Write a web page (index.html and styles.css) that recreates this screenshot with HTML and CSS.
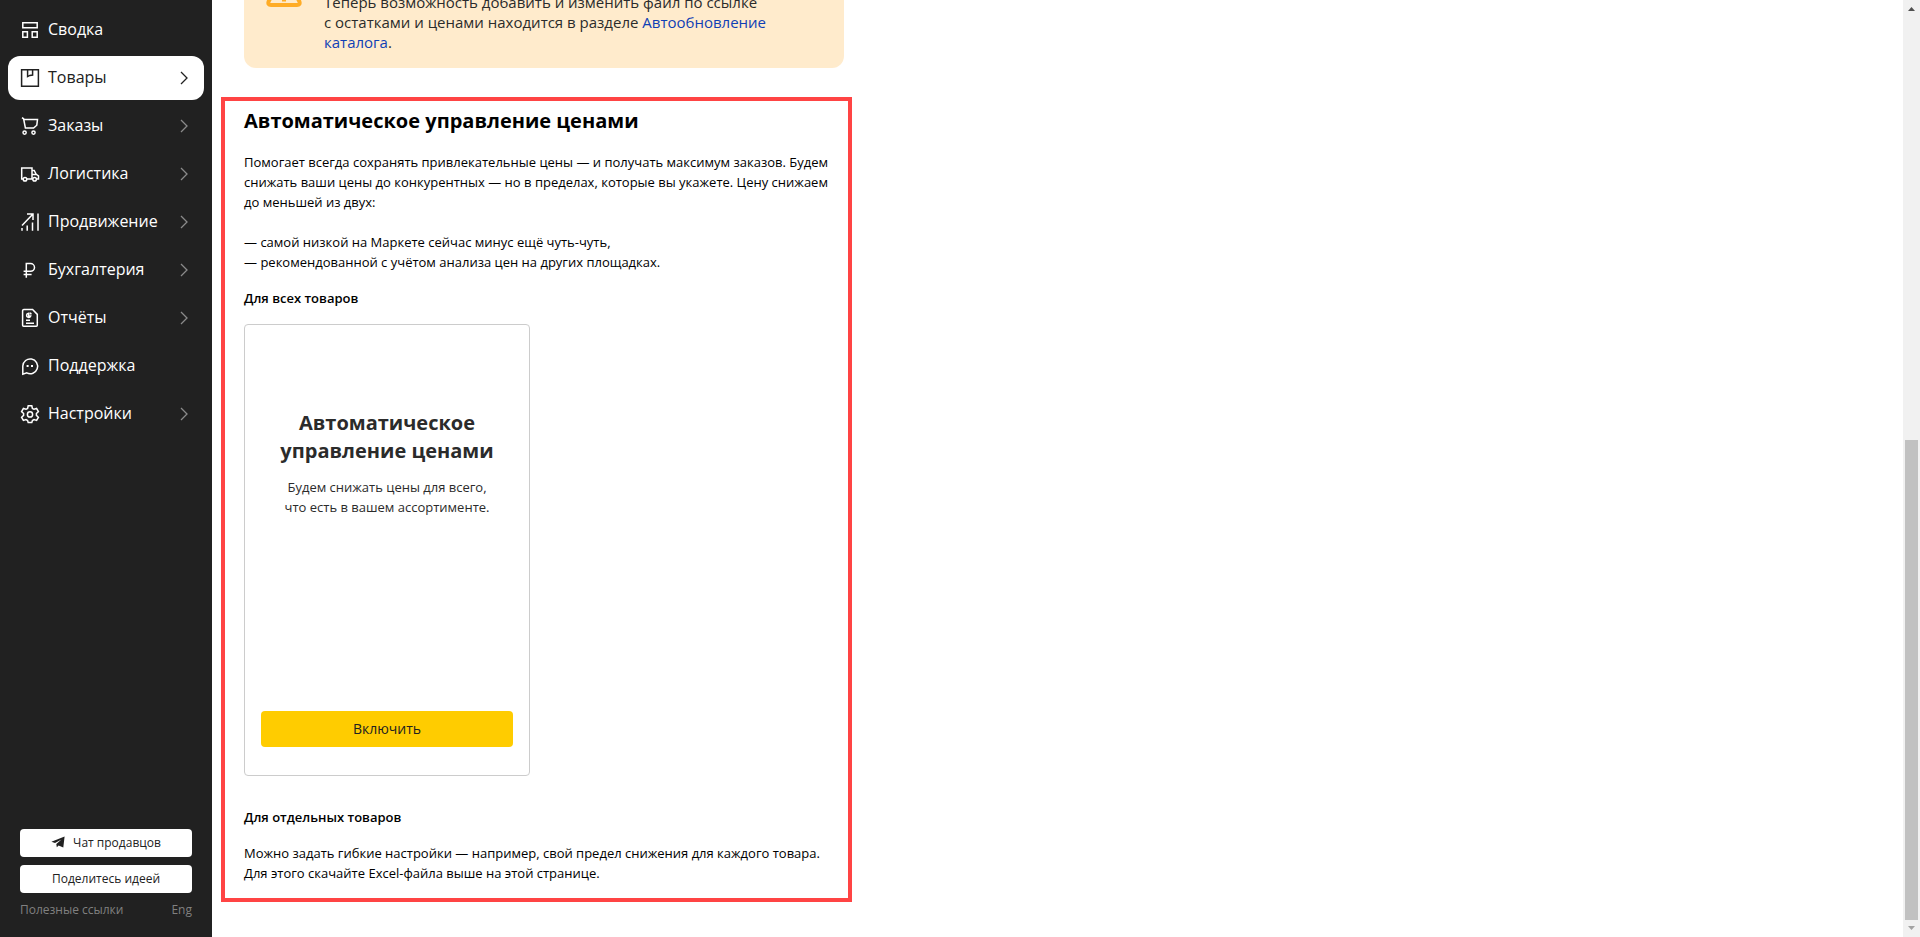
FILE: index.html
```html
<!DOCTYPE html>
<html lang="ru">
<head>
    <meta charset="UTF-8">
    <meta name="viewport" content="width=device-width, initial-scale=1.0">
    <title>Товары</title>
    <link rel="stylesheet" href="styles.css">
</head>
<body>
    <aside class="sidebar">
        <nav class="menu">
            <a class="menu-item" href="#">
                <svg class="icon" viewBox="0 0 20 20"><path d="M2.8 2.8h14.4v4.9H2.8zM2.8 11.8h4.6v5.4H2.8zM12.2 11.8h5v5.4h-5z"/></svg>
                <span class="menu-text">Сводка</span>
            </a>
            <a class="menu-item active" href="#">
                <svg class="icon" viewBox="0 0 20 20"><path d="M1.6 1.8h16.8v16.4H1.6zM7.6 2v6.6l2.2-1.2 2.8-.4V2"/></svg>
                <span class="menu-text">Товары</span>
                <svg class="arrow" viewBox="0 0 8 14"><path d="M1 1l6 6-6 6"/></svg>
            </a>
            <a class="menu-item" href="#">
                <svg class="icon" viewBox="0 0 20 20"><path d="M2 1.6l1.6 1.2L5.4 12h8.2l3.2-2.8.7-5.7-13.7-.2"/><circle cx="4.6" cy="16.6" r="1.6"/><circle cx="13.5" cy="16.6" r="1.6"/></svg>
                <span class="menu-text">Заказы</span>
                <svg class="arrow" viewBox="0 0 8 14"><path d="M1 1l6 6-6 6"/></svg>
            </a>
            <a class="menu-item" href="#">
                <svg class="icon" viewBox="0 0 20 20"><path d="M3 15H1.7V4H12v11H7M12 6.5h2.2l2 3.8 2.3 1.6V15h-1.8M12 10.5h4"/><circle cx="5" cy="15.3" r="1.8"/><circle cx="14.6" cy="15.3" r="1.8"/></svg>
                <span class="menu-text">Логистика</span>
                <svg class="arrow" viewBox="0 0 8 14"><path d="M1 1l6 6-6 6"/></svg>
            </a>
            <a class="menu-item" href="#">
                <svg class="icon" viewBox="0 0 20 20"><path d="M2 13.5L12.5 2.5M7 2h6v6M2 16v2.8M7.2 13.4v5.4M12.5 10.5v8.3M18 1.5v17.3"/></svg>
                <span class="menu-text">Продвижение</span>
                <svg class="arrow" viewBox="0 0 8 14"><path d="M1 1l6 6-6 6"/></svg>
            </a>
            <a class="menu-item" href="#">
                <svg class="icon" viewBox="0 0 20 20"><path d="M6.3 17.8V3.6h4.2a3.9 3.7 0 0 1 0 7.6H3.6M3.6 14.4h8"/></svg>
                <span class="menu-text">Бухгалтерия</span>
                <svg class="arrow" viewBox="0 0 8 14"><path d="M1 1l6 6-6 6"/></svg>
            </a>
            <a class="menu-item" href="#">
                <svg class="icon" viewBox="0 0 20 20"><path d="M4 1.6h8.6l4.7 4.8v10.8a1 1 0 0 1-1 1H3.6a1 1 0 0 1-1-1V2.8a1.2 1.2 0 0 1 1.4-1.2z"/><path d="M8.6 5.2a2.1 2.1 0 1 0 2 2.9H8.6zM10.4 4.6v1.2h1.2M6 12.2h4M6 15.2h8"/></svg>
                <span class="menu-text">Отчёты</span>
                <svg class="arrow" viewBox="0 0 8 14"><path d="M1 1l6 6-6 6"/></svg>
            </a>
            <a class="menu-item" href="#">
                <svg class="icon" viewBox="0 0 20 20"><path d="M2.8 18.2V10a7.4 7.4 0 1 1 4 6.900z"/><path class="fill" d="M6.6 9h2v2h-2zM11 9h2v2h-2z"/></svg>
                <span class="menu-text">Поддержка</span>
            </a>
            <a class="menu-item" href="#">
                <svg class="icon" viewBox="0 0 20 20"><path d="M8.2 1.8h3.6l.6 2.6 1.6.9 2.6-.8 1.8 3.1-2 1.9v1.9l2 1.9-1.8 3.1-2.6-.8-1.6.9-.6 2.1H8.2l-.6-2.1-1.6-.9-2.6.8-1.8-3.1 2-1.9V9.500l-2-1.900 1.800-3.100 2.600.8 1.600-.9z"/><circle cx="10" cy="10.400" r="2.600"/></svg>
                <span class="menu-text">Настройки</span>
                <svg class="arrow" viewBox="0 0 8 14"><path d="M1 1l6 6-6 6"/></svg>
            </a>
        </nav>

        <div class="sidebar-bottom">
            <button class="side-btn" type="button">
                <svg class="telegram" viewBox="0 0 14 12"><path d="M.4 5.800L13.600.6 12.300 11.600 7.600 9.400 5.800 11.200 5.300 8 10.500 3.400 4 6.900z"/></svg>
                Чат продавцов
            </button>
            <button class="side-btn" type="button">Поделитесь идеей</button>
            <div class="side-links">
                <a href="#">Полезные ссылки</a>
                <a href="#">Eng</a>
            </div>
        </div>
    </aside>

    <main class="content">
        <div class="alert">
            <svg class="alert-icon" viewBox="0 0 36 36"><path d="M15.400 4.500L2.600 29.500Q1.500 33 5 33H31Q34.500 33 33.400 29.500L20.600 4.500Q18 1 15.400 4.500z"/><path d="M18 12v10M18 25.500v4"/></svg>
            <p class="alert-text">Теперь возможность добавить и изменить файл по ссылке с&nbsp;остатками и ценами находится в разделе <a href="#">Автообновление каталога</a>.</p>
        </div>

        <section class="pricing">
            <h2>Автоматическое управление ценами</h2>
            <p>Помогает всегда сохранять привлекательные цены — и получать максимум заказов. Будем снижать ваши цены до конкурентных — но в пределах, которые вы укажете. Цену снижаем до&nbsp;меньшей из двух:</p>
            <p class="list">— самой низкой на Маркете сейчас минус ещё чуть-чуть,<br>— рекомендованной с учётом анализа цен на других площадках.</p>
            <h3>Для всех товаров</h3>
            <div class="card">
                <div class="card-text">
                    <h2>Автоматическое управление ценами</h2>
                    <p>Будем снижать цены для всего,<br>что есть в вашем ассортименте.</p>
                </div>
                <button class="card-btn" type="button">Включить</button>
            </div>
            <h3>Для отдельных товаров</h3>
            <p>Можно задать гибкие настройки — например, свой предел снижения для каждого товара. Для этого скачайте Excel-файла выше на этой странице.</p>
        </section>
    </main>

    <div class="scrollbar">
        <svg viewBox="0 0 7 4"><path d="M0 4h7L3.500 0z" fill="#505050"/></svg>
        <div class="thumb"></div>
        <svg viewBox="0 0 7 4"><path d="M0 0h7L3.500 4z" fill="#a3a3a3"/></svg>
    </div>
</body>
</html>
```
FILE: styles.css
```css
* {
    box-sizing: border-box;
}

body {
    display: flex;
    height: 100vh;
    margin: 0;
    overflow: hidden;
    font-family: 'Open Sans', 'Noto Sans', sans-serif;
    font-size: 13px;
    line-height: 20px;
    color: #000;
    background-color: #fff;
}

h2, h3, p {
    margin: 0;
}

a {
    text-decoration: none;
}

button {
    padding: 0 6px 2px;
    font-family: inherit;
    border: none;
    border-radius: 4px;
    cursor: pointer;
}

/* Sidebar */
.sidebar {
    display: flex;
    flex-direction: column;
    justify-content: space-between;
    flex: none;
    width: 212px;
    background-color: #212121;
}

.menu {
    display: flex;
    flex-direction: column;
    gap: 4px;
    padding: 8px;
}

.menu-item {
    display: flex;
    align-items: center;
    gap: 8px;
    height: 44px;
    padding: 0 16px 0 12px;
    border-radius: 12px;
    font-size: 16px;
    color: #fff;
}

.menu-item.active {
    background-color: #fff;
    color: #212121;
}

.menu-text {
    flex: 1;
    padding-bottom: 2px;
}

.icon {
    width: 20px;
    height: 20px;
    fill: none;
    stroke: currentColor;
    stroke-width: 1.5;
}

.icon .fill {
    fill: currentColor;
    stroke: none;
}

.arrow {
    width: 8px;
    height: 14px;
    fill: none;
    stroke: #8a8a8a;
    stroke-width: 1.3;
}

.active .arrow {
    stroke: #212121;
}

.sidebar-bottom {
    display: flex;
    flex-direction: column;
    gap: 8px;
    padding: 0 20px 18px;
}

.side-btn {
    display: flex;
    align-items: center;
    justify-content: center;
    gap: 8px;
    height: 28px;
    font-size: 12px;
    color: #212121;
    background-color: #fff;
}

.telegram {
    width: 14px;
    height: 12px;
    fill: #212121;
}

.side-links {
    display: flex;
    justify-content: space-between;
    line-height: 18px;
    font-size: 12px;
}

.side-links a {
    color: #808080;
}

/* Content, scrolled to the end */
.content {
    display: flex;
    flex-direction: column;
    justify-content: flex-end;
    align-items: flex-start;
    flex: 1;
    padding: 0 9px 35px;
}

.alert {
    display: flex;
    flex: none;
    gap: 22px;
    width: 600px;
    height: 116px;
    margin: 0 0 29px 23px;
    padding: 20px 40px 16px 22px;
    border-radius: 12px;
    background-color: #ffebcc;
}

.alert-icon {
    flex: none;
    width: 36px;
    height: 36px;
    fill: none;
    stroke: #ffac26;
    stroke-width: 4;
}

.alert-text {
    align-self: flex-end;
    font-size: 15px;
    color: #2b2b2b;
}

.alert-text a {
    color: #0f3fb5;
}

.pricing {
    flex: none;
    width: 631px;
    padding: 6px 4px 15px 19px;
    border: 4px solid #ff4444;
}

.pricing h2 {
    font-size: 20px;
    line-height: 28px;
}

.pricing h3 {
    margin-bottom: 16px;
    font-size: 13px;
    font-weight: 600;
}

.pricing > h2 {
    margin-bottom: 17px;
}

.pricing .list {
    margin: 20px 0 16px;
}

.card {
    display: flex;
    flex-direction: column;
    justify-content: space-between;
    width: 286px;
    height: 452px;
    margin-bottom: 31px;
    padding: 84px 16px 28px;
    border: 1px solid #ccc;
    border-radius: 4px;
}

.card-text {
    text-align: center;
    color: #2b2b2b;
}

.card-text h2 {
    margin-bottom: 12px;
}

.card-btn {
    height: 36px;
    font-size: 14px;
    color: #212121;
    background-color: #ffcc00;
}

/* Scrollbar */
.scrollbar {
    display: flex;
    flex-direction: column;
    align-items: center;
    flex: none;
    width: 17px;
    padding: 7px 0;
    background-color: #f1f1f1;
}

.scrollbar svg {
    width: 7px;
    height: 4px;
}

.thumb {
    width: 13px;
    height: 480px;
    margin: auto 0 6px;
    background-color: #c1c1c1;
}
```
